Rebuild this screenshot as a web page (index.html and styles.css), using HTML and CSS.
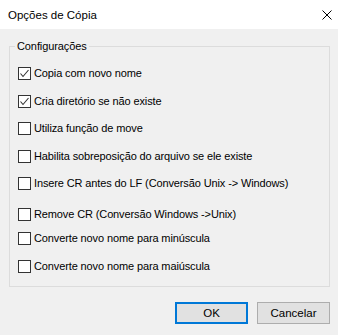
FILE: index.html
```html
<!DOCTYPE html>
<html lang="pt">
<head>
  <meta charset="UTF-8" />
  <title>Opções de Cópia</title>
  <link rel="stylesheet" href="styles.css">
</head>
<body>
  <div class="dialog">
    <!-- Title bar -->
    <div class="titlebar">
      <span class="title">Opções de Cópia</span>
      <svg class="close" width="10" height="10" viewBox="0 0 10 10">
        <path d="M0.5 0.5 L9.5 9.5 M9.5 0.5 L0.5 9.5" stroke="#000" stroke-width="1" fill="none"/>
      </svg>
    </div>

    <div class="content">
      <fieldset class="group">
        <legend>Configurações</legend>
        <div class="options">
          <label class="option"><span class="box checked"><svg width="11" height="11" viewBox="0 0 11 11"><polyline points="1.5,5.5 4,8.5 9.5,2" stroke="#333" stroke-width="1.1" fill="none"/></svg></span>Copia com novo nome</label>
          <label class="option"><span class="box checked"><svg width="11" height="11" viewBox="0 0 11 11"><polyline points="1.5,5.5 4,8.5 9.5,2" stroke="#333" stroke-width="1.1" fill="none"/></svg></span>Cria diretório se não existe</label>
          <label class="option"><span class="box"></span>Utiliza função de move</label>
          <label class="option"><span class="box"></span>Habilita sobreposição do arquivo se ele existe</label>
          <label class="option"><span class="box"></span>Insere CR antes do LF (Conversão Unix -&gt; Windows)</label>
          <label class="option wide"><span class="box"></span>Remove CR (Conversão Windows -&gt;Unix)</label>
          <label class="option tight"><span class="box"></span>Converte novo nome para minúscula</label>
          <label class="option"><span class="box"></span>Converte novo nome para maiúscula</label>
        </div>
      </fieldset>

      <div class="buttons">
        <button class="btn default">OK</button>
        <button class="btn">Cancelar</button>
      </div>
    </div>
  </div>
</body>
</html>
```

FILE: styles.css
```css
html, body { margin: 0; padding: 0; }
body {
  width: 338px;
  height: 335px;
  overflow: hidden;
  background: #f0f0f0;
  font-family: "Liberation Sans", Arial, sans-serif;
  font-size: 11px;
  color: #000;
}
.dialog { width: 338px; height: 335px; }

.titlebar {
  height: 29px;
  background: #fff;
  display: flex;
  align-items: center;
  justify-content: space-between;
  padding: 0 6px 0 8px;
  box-sizing: border-box;
}
.title { font-size: 11.5px; }

.content { padding: 9px 8px 0 9px; }

.group {
  margin: 0;
  border: 1px solid #dcdcdc;
  padding: 13px 5px 13px 8px;
  min-width: 0;
}
.group legend {
  padding: 0 2px;
  margin-left: -3px;
  line-height: 16px;
  letter-spacing: -0.1px;
}

.options { display: flex; flex-direction: column; gap: 14.5px; }
.option {
  display: flex;
  align-items: center;
  height: 13px;
  line-height: 13px;
  white-space: nowrap;
  letter-spacing: -0.12px;
}
.option.wide { margin-top: 3px; }
.option.tight { margin-top: -3px; }

.box {
  width: 13px;
  height: 13px;
  box-sizing: border-box;
  border: 1px solid #333;
  background: #fff;
  margin-right: 3px;
  display: flex;
  align-items: center;
  justify-content: center;
  flex: none;
}

.buttons {
  display: flex;
  justify-content: flex-end;
  gap: 9px;
  margin-top: 15px;
}
.btn {
  width: 73px;
  height: 22px;
  box-sizing: border-box;
  font-family: inherit;
  font-size: 11.5px;
  color: #000;
  background: #e1e1e1;
  border: 1px solid #adadad;
  padding: 0;
}
.btn.default { border: 2px solid #0078d7; }
```
